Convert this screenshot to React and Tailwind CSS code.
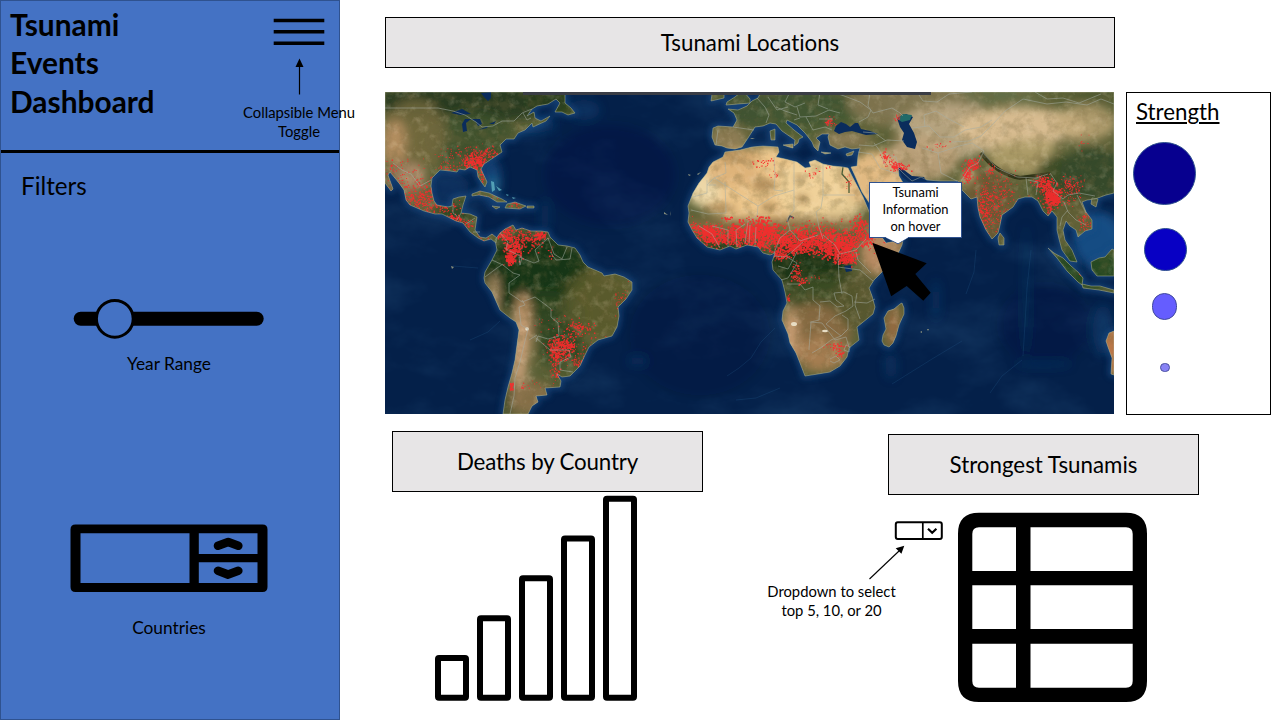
import React from "react";

const NORTH_AMERICA =
  "M385 92H565L565 103L571 108L575 113L568 115L562 112L555 112L560 103L556 99L548 104L537 106L532 109L527 116L534 112L535 118L541 121L550 116L546 121L533 127L532 123L525 130L518 133L514 139L506 139L500 145L502 152L493 158L484 164L481 169L487 182L485 187L482 183L478 177L477 170L470 167L465 170L459 169L457 172L450 171L440 170L432 178L431 186L432 193L434 201L437 205L448 207L452 206L453 199L459 197L466 196L463 205L461 213L470 214L477 217L475 230L480 237L486 238L492 234L497 238L496 243L491 239L484 241L478 238L470 232L463 223L456 221L450 218L442 214L435 214L424 211L410 205L406 200L404 190L399 183L390 172L388 175L393 189L391 191L385 183Z";
const SOUTH_AMERICA =
  "M495 240L500 233L505 229L513 225L516 230L522 228L531 231L541 231L548 232L550 237L558 245L567 246L575 248L580 255L583 262L588 267L602 273L604 276L615 274L624 277L632 282L632 290L626 299L618 307L619 316L617 327L612 336L598 340L589 347L585 355L580 366L573 373L570 376L562 377L557 374L561 381L560 387L545 388L547 395L536 396L538 402L532 406L528 414H503L505 400L508 387L512 373L515 360L517 345L519 330L516 322L510 318L500 310L492 292L485 283L484 278L485 272L492 260L497 250Z";
const AFRICA =
  "M725 152L740 150L752 147L763 146L778 147L779 152L776 157L785 159L797 162L805 168L811 167L809 162L815 160L823 164L833 166L843 167L848 168L852 176L863 197L868 209L874 224L881 236L886 243L903 240L902 245L896 258L884 270L874 280L869 288L872 296L875 307L873 314L857 327L859 340L849 348L847 357L840 366L830 372L818 374L805 376L800 363L796 353L790 343L788 334L782 320L783 311L787 303L785 292L782 280L773 270L772 262L775 253L770 255L763 253L758 247L747 245L736 249L730 246L720 250L707 247L697 238L692 230L688 222L689 213L688 206L693 193L699 183L707 173L709 167L713 162L723 157Z";
const EURASIA =
  "M713 128L718 126L733 127L737 120L734 113L728 109L738 110L747 106L752 101L758 98L761 92H1114V193L1106 195L1095 199L1087 200L1082 202L1086 212L1092 220L1092 229L1085 231L1078 237L1076 230L1070 226L1066 221L1063 230L1065 240L1072 250L1077 262L1070 261L1062 250L1059 239L1057 230L1057 217L1052 211L1048 216L1043 211L1038 201L1032 197L1025 197L1018 199L1013 207L1002 215L1000 225L998 233L992 239L986 230L980 217L978 208L977 197L971 199L962 190L958 181L940 181L927 180L921 177L912 181L903 173L898 168L899 176L905 186L920 186L915 206L888 222L880 220L870 204L862 192L856 178L851 167L857 166L858 156L860 148L852 149L845 147L838 149L830 145L828 137L829 134L822 134L816 138L820 142L818 151L814 147L812 142L805 133L797 125L787 120L786 123L794 130L803 137L799 139L798 143L794 146L795 140L782 131L776 124L770 123L763 126L755 127L748 138L742 147L735 149L727 148L722 146L715 145L712 137Z";
const ISLANDS = [
  "M727 102L735 97L740 93L744 92L750 99L750 103L738 104L726 105Z",
  "M712 94L724 92L724 98L711 101Z",
  "M783 145L793 144L793 148L789 147Z",
  "M770 131L775 129L775 140L771 140Z",
  "M821 152L831 153L825 154Z",
  "M846 154L854 151L852 155L847 156Z",
  "M472 194L480 191L489 193L502 199L507 202L497 202L489 197L479 195L472 196Z",
  "M507 204L515 202L526 206L520 209L505 208Z",
  "M492 206L500 207L496 209Z",
  "M527 206L534 206L534 208L527 208Z",
  "M884 318L888 311L894 309L900 304L902 303L904 308L904 314L899 325L896 336L893 343L889 347L884 345L882 341L883 335L886 329Z",
  "M1000 233L1004 238L1004 245L999 245L998 238Z",
  "M1048 248L1054 253L1063 258L1071 266L1078 272L1083 278L1082 285L1078 282L1067 271L1057 258Z",
  "M1082 284L1091 286L1100 286L1114 290V293L1099 290L1083 288Z",
  "M1091 262L1099 258L1105 257L1112 249L1114 250V276H1097L1092 270Z",
  "M1092 198L1098 199L1096 207L1091 204Z",
  "M1114 331L1109 333L1106 341L1108 347L1112 358L1111 374L1114 375Z",
];
const LAND = [NORTH_AMERICA, SOUTH_AMERICA, AFRICA, EURASIA, ...ISLANDS];

const LAKES = [
  "M834 131L836 126L841 122L846 124L850 127L855 123L858 123L861 129L870 131L878 134L866 135L852 131L845 132L839 134Z",
  "M897 118L906 114L913 117L909 124L914 133L917 142L915 149L907 147L902 140L904 133L900 127Z",
  "M463 132L462 124L465 119L471 119L466 123L467 131Z",
  "M471 119L480 119L482 124L478 126L476 122Z",
  "M451 113L462 109L471 114L460 115Z",
  "M478 130L488 126L487 128Z M489 124L496 121L494 124Z",
  "M481 93L491 92L491 98L488 101L484 97Z",
  "M844 266L851 265L852 271L846 272Z",
];

const BORDERS = [
  "M385 108H438L453 111L465 115L476 122L482 127L493 126L502 121H514L522 113L532 109",
  "M393 163L402 170L411 174L420 186L431 180",
  "M523 113L527 120L531 118M453 205V213L457 216M461 213L457 220M466 224L475 218M473 232L480 232",
  "M500 233L508 242L506 249L522 257L520 265M492 260L503 265L513 273L520 275M485 277L497 268L503 264",
  "M520 275L509 283L509 293L518 299L522 302L535 297L546 305L551 309V317L558 323L559 336L548 339L538 336L536 342",
  "M519 307L525 305L522 300M520 265L519 257L534 263L539 261L535 250L548 238L554 254L562 259L567 247M550 252L556 260L570 259L572 248",
  "M536 338L550 350L569 350L571 357L560 362L560 370L573 372",
  "M519 307L521 325L528 329L524 345L520 362L515 378L514 396L510 414M537 335L529 340",
  "M716 145L718 130M733 127L754 130M757 98L765 107L769 115L766 123M768 97L777 110L788 107M790 92L785 102L795 107L805 103M797 107L800 117L816 116L829 110L840 113M820 92L818 105L828 109M806 117L813 130L825 127L832 130",
  "M776 107L785 111L797 115M800 118L794 120M819 119L833 119M833 92L847 97L860 102L871 110L868 117L859 122",
  "M714 178L758 206L774 196L794 190L794 161M823 164V195H855M823 195L821 208L816 212L819 227L823 239",
  "M774 157L775 176L774 190L783 191M725 162L726 173L714 178L707 185H716M707 180V193L693 197M725 182L726 213L708 214L691 210",
  "M758 206L757 216L748 221L745 243M737 247L736 230L745 224M749 244L750 225M755 245L756 227M720 248L712 234L699 226M728 247L728 230L712 226",
  "M794 190V210L787 218L790 230L780 238L774 253M790 230L800 241L818 235M823 235L835 245L840 254L856 250L866 239M838 254L839 278L842 294M856 252L858 260L871 273",
  "M774 256L785 257L793 251L803 242M787 257L797 263L788 278L781 280M797 252L788 269L778 266",
  "M787 284H800L805 290L813 287L813 300L820 306L819 320L811 322L809 350",
  "M820 302L830 301L837 307L844 306L836 300L834 293L844 292L852 296L853 306L846 311L835 316L826 324L841 336L848 329L848 319L842 315M854 302L867 303L875 299M857 293L855 305L860 319M838 267L860 270L873 281M810 322L822 323L835 340L846 337L849 347",
  "M841 336L831 340L822 347L812 353M830 359L836 356L840 360L834 363L830 361M846 345L850 347L849 352L844 350Z",
  "M870 92L868 106L873 113L892 108L900 113L903 116M917 92L923 101L937 102L949 94L972 92",
  "M912 128L929 126L940 137L954 137L965 130L981 127L992 120M925 127L924 115L936 111L947 118L964 127",
  "M859 145L873 146L887 140L904 141M863 132L875 133L886 141M884 153L896 157L899 168M858 152L872 154L880 168L898 174M874 143L880 151L885 165",
  "M922 148L938 153L941 173L957 181M938 153L959 146L972 143L984 151L978 163L970 167L961 181M952 142L969 141L981 136L994 123L1005 111L1023 99L1047 104L1066 102L1087 105L1101 99L1114 104",
  "M981 151L997 168L1017 177L1036 178L1048 174M1026 178L1028 195M1028 180L1038 182L1036 195M1050 173L1057 183L1053 191L1063 199L1068 195L1079 193L1095 196M1064 202L1068 212L1076 220L1086 225M1077 195L1086 213M1068 210L1062 217L1060 226",
  "M1035 92L1047 99L1063 98L1079 103L1101 94",
];

const TINTS = [
  ["#25391f", 470, 102, 95, 20, 0.9],
  ["#3d512b", 470, 140, 45, 28, 0.9],
  ["#776a40", 415, 135, 32, 36, 0.8],
  ["#b48f62", 394, 143, 13, 24, 0.95],
  ["#8a6e4e", 404, 180, 20, 20, 0.8],
  ["#b59473", 412, 176, 14, 12, 0.8],
  ["#7a6440", 424, 200, 15, 10, 0.7],
  ["#2d4522", 455, 213, 22, 14, 0.9],
  ["#263d1d", 555, 103, 28, 15, 0.8],
  ["#173418", 535, 272, 54, 38, 1],
  ["#173418", 505, 285, 16, 26, 0.9],
  ["#2c4320", 548, 315, 38, 24, 0.85],
  ["#5b5a2c", 598, 303, 34, 36, 0.85],
  ["#25401e", 563, 350, 25, 20, 0.7],
  ["#4f5a30", 560, 372, 18, 16, 0.7],
  ["#b48d63", 523, 330, 9, 38, 1],
  ["#c6a078", 519, 355, 9, 45, 0.9],
  ["#90734e", 529, 398, 24, 17, 0.8],
  ["#bd9971", 494, 294, 5, 20, 0.9],
  ["#213a1e", 508, 402, 3, 16, 0.9],
  ["#edc68b", 770, 184, 86, 38, 1],
  ["#f0d19a", 823, 190, 46, 36, 0.9],
  ["#ecd9ab", 704, 190, 18, 16, 0.9],
  ["#d6a970", 735, 174, 28, 13, 0.6],
  ["#a3733f", 738, 156, 24, 5, 0.55],
  ["#8b6d40", 780, 225, 103, 8, 0.9],
  ["#1b3616", 806, 266, 45, 24, 1],
  ["#203b18", 725, 248, 38, 7, 1],
  ["#3b4b25", 820, 295, 40, 20, 0.9],
  ["#8c6c43", 815, 334, 36, 31, 0.9],
  ["#cba074", 790, 335, 8, 29, 0.9],
  ["#a87f52", 821, 354, 26, 18, 0.9],
  ["#55562d", 857, 301, 22, 28, 0.85],
  ["#c18f66", 882, 253, 22, 23, 0.9],
  ["#415332", 785, 108, 72, 21, 1],
  ["#96815a", 728, 138, 18, 12, 0.85],
  ["#435b30", 808, 118, 48, 20, 0.5],
  ["#91805a", 844, 140, 28, 9, 0.9],
  ["#e2ba82", 880, 179, 37, 29, 1],
  ["#8a7c58", 915, 104, 68, 25, 0.8],
  ["#bda985", 950, 131, 54, 28, 0.9],
  ["#bea27b", 922, 158, 37, 23, 0.9],
  ["#66724a", 1002, 95, 40, 10, 0.8],
  ["#d8bc90", 1022, 129, 66, 22, 1],
  ["#b09e6a", 1031, 157, 44, 18, 0.9],
  ["#c0a778", 1085, 123, 31, 18, 0.8],
  ["#4f5a30", 1096, 94, 27, 10, 0.9],
  ["#4f5a30", 1066, 147, 14, 10, 0.7],
  ["#d7b987", 971, 179, 10, 10, 0.85],
  ["#6b5a33", 989, 204, 26, 36, 0.95],
  ["#3b4b25", 1062, 185, 29, 31, 1],
  ["#36482a", 1093, 174, 33, 27, 1],
  ["#646037", 1075, 213, 22, 15, 0.8],
  ["#284820", 1087, 268, 35, 22, 1],
  ["#bd7849", 1112, 350, 10, 25, 1],
  ["#9c6d44", 893, 326, 8, 22, 0.9],
  ["#4f6030", 903, 315, 3, 16, 0.8],
];

const OCEAN_TINTS = [
  ["#174a80", 584, 110, 16, 10, 0.4],
  ["#174a80", 530, 125, 26, 8, 0.5],
  ["#1b4c83", 492, 179, 9, 20, 0.8],
  ["#174479", 449, 188, 20, 16, 0.4],
  ["#2a7da0", 494, 184, 5, 7, 0.7],
  ["#174478", 545, 216, 5, 17, 0.3],
  ["#021536", 610, 175, 65, 50, 0.25],
  ["#021538", 700, 335, 70, 60, 0.15],
  ["#134277", 638, 361, 10, 5, 0.35],
  ["#174477", 936, 300, 4, 20, 0.4],
  ["#18477b", 891, 366, 6, 13, 0.35],
  ["#1b5189", 1098, 240, 25, 28, 0.9],
  ["#164579", 1103, 330, 10, 25, 0.5],
  ["#113b6d", 1043, 364, 28, 3, 0.5],
  ["#02163a", 1045, 325, 45, 40, 0.2],
  ["#15426f", 1026, 290, 1.5, 65, 0.6],
];

// cluster: centre x, centre y, spread x, spread y, count, mark size
const FIRES = [
  [475, 162, 8, 6, 200, 1.6], [485, 154, 13, 5, 100, 1.3], [462, 155, 20, 9, 80, 1.1], [482, 177, 3, 8, 26, 1.2],
  [450, 168, 12, 4, 36, 1.2], [407, 185, 13, 14, 90, 1.2], [421, 198, 12, 10, 120, 1.4], [438, 207, 13, 4, 60, 1.3],
  [415, 202, 12, 6, 60, 1.3], [430, 192, 3, 10, 30, 1.3],
  [453, 218, 5, 2.5, 60, 1.6], [465, 224, 5, 4, 36, 1.3], [395, 168, 8, 6, 24, 1.1], [478, 236, 8, 3, 18, 1.2],
  [505, 234, 5, 6, 100, 1.6], [522, 239, 14, 8, 170, 1.5], [513, 251, 6, 7, 150, 1.7], [509, 258, 3, 4, 70, 1.7], [540, 235, 4, 3, 60, 1.6],
  [551, 253, 3, 4, 15, 1.2], [515, 204, 4, 2, 20, 1.2], [488, 196, 10, 3, 16, 1],
  [562, 346, 9, 8, 200, 1.6], [555, 355, 5, 8, 85, 1.5], [578, 327, 10, 5, 70, 1.4], [570, 345, 20, 11, 80, 1.2],
  [555, 372, 4, 5, 32, 1.4], [577, 363, 4, 4, 28, 1.3], [621, 298, 7, 10, 50, 1.1], [511, 386, 1.5, 2.5, 30, 1.5],
  [523, 386, 2, 2, 9, 1.2], [545, 383, 16, 7, 14, 1], [552, 322, 17, 10, 26, 1.1],
  [764, 163, 7, 4, 25, 1.3], [773, 174, 5, 2, 10, 1.2], [812, 173, 7, 3, 20, 1.2], [828, 167, 3, 1, 8, 1],
  [700, 229, 8, 5, 90, 1.6], [711, 235, 8, 7, 190, 1.9], [726, 238, 8, 6, 110, 1.7], [738, 234, 8, 8, 170, 1.8], [750, 234, 6, 10, 170, 1.8],
  [765, 231, 9, 9, 240, 1.9], [760, 244, 6, 3, 50, 1.6], [779, 239, 7, 8, 110, 1.7], [790, 244, 8, 7, 140, 1.8], [804, 238, 9, 8, 180, 1.8],
  [803, 248, 10, 4, 90, 1.8], [820, 242, 8, 8, 150, 1.8], [833, 247, 8, 9, 180, 1.9], [846, 249, 8, 8, 210, 1.9], [845, 238, 14, 6, 100, 1.6],
  [858, 226, 5, 7, 110, 1.6], [862, 238, 5, 6, 50, 1.5], [829, 232, 12, 5, 60, 1.5], [780, 254, 8, 4, 80, 1.6],
  [755, 233, 68, 10, 260, 1.3], [820, 238, 50, 10, 200, 1.3],
  [796, 272, 5, 7, 50, 1.5], [802, 281, 4, 3, 20, 1.5], [788, 298, 1, 3, 20, 1.5], [816, 277, 4, 1, 8, 1.1],
  [846, 260, 8, 3, 90, 1.6], [836, 347, 7, 3, 45, 1.2], [840, 354, 4, 2, 15, 1.2], [870, 240, 4, 7, 30, 1.5],
  [727, 218, 3, 1.5, 16, 1.3], [848, 184, 2, 8, 16, 1], [829, 121, 4, 3, 50, 1.1],
  [884, 156, 2, 6, 35, 1.2], [898, 166, 7, 3, 90, 1.4], [890, 160, 4, 4, 24, 1.2], [897, 117, 2, 2, 18, 1.1],
  [939, 145, 10, 5, 14, 1.1], [973, 163, 5, 4, 90, 1.4], [966, 174, 3, 6, 80, 1.5], [990, 170, 3, 4, 26, 1.2],
  [990, 207, 11, 18, 220, 1.2], [982, 212, 5, 14, 100, 1.3], [1007, 195, 13, 6, 55, 1.1], [998, 184, 15, 9, 35, 1.1],
  [1043, 182, 8, 5, 110, 1.4], [1053, 197, 5, 7, 260, 1.7], [1046, 193, 5, 10, 110, 1.4], [1071, 184, 8, 5, 90, 1.2],
  [1070, 198, 6, 6, 40, 1.1], [1084, 221, 4, 5, 50, 1.2], [1050, 210, 2, 4, 24, 1.2], [1082, 272, 3, 3, 16, 1.3],
  [1083, 143, 5, 8, 10, 1],
];

function seeded(seed) {
  let s = seed;
  return () => {
    s = (s * 1664525 + 1013904223) % 4294967296;
    return s / 4294967296;
  };
}

function firePath() {
  const rnd = seeded(2021);
  let d = "";
  for (const [cx, cy, sx, sy, n, size] of FIRES) {
    for (let i = 0; i < n; i++) {
      const gx = (rnd() + rnd() + rnd() - 1.5) * 1.45;
      const gy = (rnd() + rnd() + rnd() - 1.5) * 1.45;
      const w = size * (0.6 + rnd() * 0.5);
      const x = cx + gx * sx;
      const y = cy + gy * sy;
      d += `M${x.toFixed(1)} ${y.toFixed(1)}h${w.toFixed(1)}v${w.toFixed(1)}h-${w.toFixed(1)}z`;
    }
  }
  return d;
}
const FIRE_PATH = firePath();

function Tint({ list }) {
  return list.map(([fill, cx, cy, rx, ry, o], i) => (
    <ellipse key={i} cx={cx} cy={cy} rx={rx} ry={ry} fill={fill} opacity={o} />
  ));
}

function WorldMap() {
  return (
    <svg className="block h-[322px] w-[729px]" viewBox="385 92 729 322" role="img" aria-label="World map">
      <defs>
        <clipPath id="land">
          {LAND.map((d, i) => <path key={i} d={d} />)}
        </clipPath>
        <filter id="soft" x="-30%" y="-30%" width="160%" height="160%"><feGaussianBlur stdDeviation="5" /></filter>
        <filter id="shelf" x="-5%" y="-5%" width="110%" height="110%"><feGaussianBlur stdDeviation="3" /></filter>
        <filter id="grain" x="0" y="0" width="100%" height="100%">
          <feTurbulence type="fractalNoise" baseFrequency="0.09" numOctaves="5" seed="8" />
          <feColorMatrix values="0 0 0 0 0.18  0 0 0 0 0.14  0 0 0 0 0.05  3.4 0 0 0 -1.5" />
        </filter>
        <filter id="glint" x="0" y="0" width="100%" height="100%">
          <feTurbulence type="fractalNoise" baseFrequency="0.12" numOctaves="4" seed="21" />
          <feColorMatrix values="0 0 0 0 1  0 0 0 0 0.85  0 0 0 0 0.62  0 2.6 0 0 -1.3" />
        </filter>
        <filter id="swell" x="0" y="0" width="100%" height="100%">
          <feTurbulence type="fractalNoise" baseFrequency="0.012 0.02" numOctaves="5" seed="5" />
          <feColorMatrix values="0 0 0 0 0.08  0 0 0 0 0.26  0 0 0 0 0.48  2 0 0 0 -0.9" />
        </filter>
      </defs>
      <rect x="385" y="92" width="729" height="322" fill="#042049" />
      <rect x="385" y="92" width="729" height="322" filter="url(#swell)" opacity="0.18" />
      <g filter="url(#soft)"><Tint list={OCEAN_TINTS} /></g>
      <g filter="url(#shelf)" fill="#1d4f86" stroke="#1d4f86" strokeWidth="5" opacity="0.7">
        {LAND.map((d, i) => <path key={i} d={d} />)}
      </g>
      <g fill="none" stroke="#205684" strokeWidth="1" opacity="0.3">
        <path d="M453 266l25 2M470 340l18-8 12-11M727 376l12-8 12-10 10-16 14-14M736 400l20-2 24-10M976 250l-2 22-8 22M1031 250l-4 38-2 36-2 32M892 384l40-25 30-18M990 393l12-17 20-16" />
      </g>
      <g clipPath="url(#land)">
        <rect x="385" y="92" width="729" height="322" fill="#5b6137" />
        <g filter="url(#soft)"><Tint list={TINTS} /></g>
        <path d="M981 153Q997 174 1020 178L1050 174" fill="none" stroke="#303418" strokeWidth="4" />
        <g fill="#8a6a3c" opacity="0.6" filter="url(#shelf)">
          <ellipse cx="764" cy="185" rx="12" ry="6" />
          <ellipse cx="769" cy="207" rx="8" ry="4" />
          <ellipse cx="802" cy="199" rx="6" ry="5" />
          <ellipse cx="800" cy="178" rx="4" ry="4" />
          <ellipse cx="720" cy="208" rx="16" ry="4" />
        </g>
        <rect x="385" y="92" width="729" height="322" filter="url(#grain)" opacity="0.27" />
        <rect x="385" y="92" width="729" height="322" filter="url(#glint)" opacity="0.18" />
        <path d="M843 167L842 174L849 182L849 193" fill="none" stroke="#4c5d37" strokeWidth="1.3" />
        <path d="M787 222l3-6 4 2" fill="none" stroke="#555" strokeWidth="1.5" />
      </g>
      <g fill="#0a2c5c">
        {LAKES.map((d, i) => <path key={i} d={d} />)}
        <path d="M898 167l6 3 8 6 12 1 3 5h-18l-7-5z" />
      </g>
      <path d="M897 119l6-5 9 1-2 5-8 2z" fill="#216a68" />
      <g fill="#e8ddc4"><circle cx="527" cy="329" r="1.8" /><ellipse cx="794" cy="324" rx="3" ry="2" /><ellipse cx="825" cy="331" rx="3" ry="1.3" /></g>
      <g fill="#6cc0cc" opacity="0.7"><path d="M491 181l3 1 1 8-3 2zM496 186l6 4-3 1zM506 194l3 1-2 1zM512 197l4 1-3 1z" /></g>
      <g fill="#a9aa8a" opacity="0.8"><path d="M664 212l4 3-4-1zM670 214l1-3-1 5zM688 174l3 1-2 1zM697 174l4-2-3 3zM451 266l3 1-2 2zM920 332l2-1v2zM927 329l2 0-1 2zM750 138l5 0-3 1z" /></g>
      <path d={FIRE_PATH} fill="#f92a2d" clipPath="url(#land)" opacity="0.92" />
      <g fill="none" stroke="#b9bda4" strokeWidth="0.7" opacity="0.65" strokeLinejoin="round">
        {LAND.map((d, i) => <path key={i} d={d} />)}
      </g>
      <g fill="none" stroke="#a6aea6" strokeWidth="0.8" opacity="0.65" strokeLinejoin="round">
        {BORDERS.map((d, i) => <path key={i} d={d} />)}
      </g>
      <path d="M523 92H931V95H523Z" fill="#3a3d45" />
    </svg>
  );
}

function Heading({ children, className }) {
  return (
    <h2 className={"flex items-center justify-center border border-black bg-[#e7e5e6] text-[22.3px] leading-6 " + className}>
      {children}
    </h2>
  );
}

function Sidebar() {
  return (
    <aside className="flex h-[720px] w-[340px] shrink-0 flex-col border border-[#2f528f] bg-[#4472c4]">
      <header className="flex h-[152px] border-b-[3px] border-black">
        <h1 className="w-[180px] pt-[4px] pl-[9px] text-[29.9px] leading-[38.4px] font-bold">
          Tsunami<br />Events<br />Dashboard
        </h1>
        <div className="-mr-[17px] ml-auto flex w-[114px] shrink-0 flex-col items-center">
          <svg className="mt-[13px] h-[86px] w-[60px]" viewBox="269 14 60 86">
            <path d="M273.7 20.5H324.3M273.7 31.8H324.3M273.7 43.2H324.3" stroke="#000" strokeWidth="3.6" />
            <path d="M299.5 66V94.5" stroke="#000" strokeWidth="1.2" />
            <path d="M299.5 58.5L303.5 67H295.5Z" />
          </svg>
          <p className="mt-[3px] text-center text-[14.8px] leading-[19px] whitespace-nowrap">
            Collapsible Menu<br />Toggle
          </p>
        </div>
      </header>
      <h2 className="mt-[17px] pl-[20px] text-[24.2px] leading-8">Filters</h2>
      <div className="mt-[95px] flex w-[336px] flex-col items-center">
        <svg className="h-[44px] w-[194px]" viewBox="72 297 194 44">
          <rect x="73.7" y="311.7" width="190" height="14" rx="7" />
          <circle cx="114.8" cy="318.8" r="18.4" fill="#4472c4" stroke="#000" strokeWidth="3" />
        </svg>
        <p className="mt-[12px] text-[17.3px] leading-[22px]">Year Range</p>
      </div>
      <div className="mt-[149px] flex w-[336px] flex-col items-center">
        <svg className="h-[68px] w-[198px]" viewBox="70.5 524 198 68">
          <path fillRule="evenodd" d="M76 524.5H263Q268 524.5 268 529.5V587Q268 592 263 592H76Q71 592 71 587V529.5Q71 524.5 76 524.5ZM81 533.3V583H190V533.3ZM199.3 533.3V554H258V533.3ZM199.3 562.3V583H258V562.3Z" />
          <path d="M218.5 545.8L228.7 542L238.8 545.8M218.5 570.8L228.7 574.6L238.8 570.8" fill="none" stroke="#000" strokeWidth="8.6" strokeLinecap="round" strokeLinejoin="round" />
        </svg>
        <p className="mt-[25px] text-[17.3px] leading-[22px]">Countries</p>
      </div>
    </aside>
  );
}

function Legend() {
  return (
    <section className="flex h-[323px] w-[145px] flex-col border border-black bg-white">
      <h2 className="mt-[5px] pl-[9px] text-[22.3px] leading-[27px] underline decoration-2 underline-offset-[2px]">Strength</h2>
      <div className="mt-[17px] flex w-[74px] flex-col items-center">
        <div className="h-[63px] w-[63px] rounded-full border border-[#2f528f] bg-[#07008f]" />
        <div className="mt-[23px] ml-[2px] h-[43px] w-[43px] rounded-full border border-[#2f528f] bg-[#0800c4]" />
        <div className="mt-[22px] h-[27px] w-[25px] rounded-full border border-[#414a9c] bg-[#655dff]" />
        <div className="mt-[43px] ml-[2px] h-[9px] w-[10px] rounded-full border border-[#4a50a0] bg-[#8883f5]" />
      </div>
    </section>
  );
}

function BarChart() {
  const tops = [655, 615.3, 575.3, 535.5, 495.8];
  return (
    <svg className="mt-[2px] ml-[41px] h-[210px] w-[206px]" viewBox="433 494 206 210">
      {tops.map((t, i) => (
        <rect key={t} x={438 + i * 42} y={t + 3} width="28" height={697.8 - t - 3} rx="1" fill="none" stroke="#000" strokeWidth="6" strokeLinejoin="round" />
      ))}
    </svg>
  );
}

export default function App() {
  return (
    <div className="flex h-[720px] w-[1280px] overflow-hidden bg-white font-['Lato',sans-serif] text-black [font-variant-ligatures:none]">
      <Sidebar />
      <main className="flex shrink-0 flex-col pt-[17px] pl-[45px]">
        <Heading className="h-[51px] w-[730px]">Tsunami Locations</Heading>
        <div className="mt-6 flex gap-3">
          <div className="relative h-[322px] w-[729px]">
            <WorldMap />
            <svg className="absolute top-[88px] left-[482px] h-[124px] w-[66px]" viewBox="867 180 66 124">
              <path d="M872.3 242.8L926.7 263.3L915.3 274L930.7 292.7L923.3 300.8L906.7 286L891.2 296.2Z" />
              <path d="M885 237L898 243.7L909 237" fill="#fff" stroke="#2f528f" strokeWidth="1" />
            </svg>
            <p className="absolute top-[90px] left-[484px] h-[56px] w-[93px] border border-[#2f528f] bg-white pt-px text-center text-[12.9px] leading-[17px]">
              Tsunami<br />Information<br />on hover
            </p>
            <svg className="absolute top-[143px] left-[500px] h-[9px] w-[24px]" viewBox="885 235 24 9">
              <path d="M886 235V237.5L898 243.2L908 237.5V235Z" fill="#fff" />
            </svg>
          </div>
          <Legend />
        </div>
        <div className="flex">
          <section className="mt-4 ml-[7px] w-[311px]">
            <Heading className="h-[61px] w-[311px] tracking-[-0.15px]">Deaths by Country</Heading>
            <BarChart />
          </section>
          <section className="mt-[19px] ml-[62px] w-[434px]">
            <Heading className="ml-[123px] h-[61px] w-[311px]">Strongest Tsunamis</Heading>
            <div className="mt-[16px] flex">
              <div className="flex w-[178px] flex-col">
                <svg className="mt-[7px] ml-auto h-[64px] w-[80px]" viewBox="863 518 80 64">
                  <rect x="895.8" y="522.3" width="46" height="16.6" rx="2" fill="none" stroke="#000" strokeWidth="2" />
                  <path d="M922.8 522V539" stroke="#000" strokeWidth="1.7" />
                  <path d="M928 528.8L932.2 532.8L936.4 528.8" fill="none" stroke="#000" strokeWidth="2.2" />
                  <path d="M869.5 579L899 551" stroke="#000" strokeWidth="1.1" />
                  <path d="M904.3 545.8L901.4 553.8L895.7 548.2Z" />
                </svg>
                <p className="w-[133px] text-center text-[14.8px] leading-[19px] whitespace-nowrap">
                  Dropdown to select<br />top 5, 10, or 20
                </p>
              </div>
              <svg className="ml-[13px] h-[192px] w-[192px]" viewBox="956 511 192 192">
                <path fillRule="evenodd" d="M979 512.8H1126Q1147 512.8 1147 533.8V681Q1147 702 1126 702H979Q958 702 958 681V533.8Q958 512.8 979 512.8ZM979 527.2Q972.3 527.2 972.3 534V571H1016V527.2ZM1030.5 527.2V571H1132.7V534Q1132.7 527.2 1126 527.2ZM972.3 585.3V629H1016V585.3ZM1030.5 585.3V629H1132.7V585.3ZM972.3 643.7V681Q972.3 687.7 979 687.7H1016V643.7ZM1030.5 643.7V687.7H1126Q1132.7 687.7 1132.7 681V643.7Z" />
              </svg>
            </div>
          </section>
        </div>
      </main>
    </div>
  );
}
